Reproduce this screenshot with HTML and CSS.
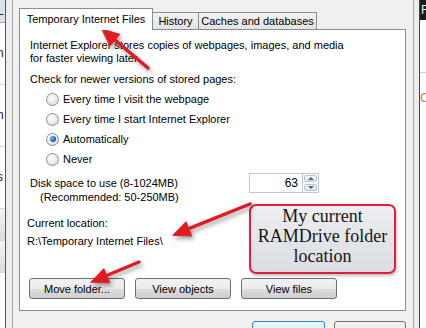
FILE: index.html
```html
<!DOCTYPE html>
<html lang="en">
<head>
    <meta charset="UTF-8">
    <meta name="viewport" content="width=device-width, initial-scale=1.0">
    <title>Internet Options - Temporary Internet Files</title>
    <link rel="stylesheet" href="styles.css">
</head>
<body>
    <!-- 화면 전체 영역 -->
    <div class="screen">
        <!-- 왼쪽 뒤에 보이는 다른 창 조각 -->
        <div class="back-left">
            <div class="back-row back-sel">L</div>
            <div class="back-row back-tall">n</div>
            <div class="back-row back-tall">n</div>
            <div class="back-row back-tall">s</div>
            <div class="back-row back-btn"></div>
            <div class="back-row back-btn"></div>
        </div>

        <!-- 대화상자 창 -->
        <div class="dialog">
            <div class="dialog-body">
                <!-- 탭 목록 -->
                <div class="tabs">
                    <div class="tab active">Temporary Internet Files</div>
                    <div class="tab tab-history">History</div>
                    <div class="tab tab-caches">Caches and databases</div>
                </div>

                <!-- 탭 내용 -->
                <div class="panel">
                    <p class="intro">Internet Explorer stores copies of webpages, images, and media<br>for faster viewing later.</p>
                    <p class="check">Check for newer versions of stored pages:</p>

                    <!-- 라디오 버튼 목록 -->
                    <div class="radios">
                        <div class="radio"><span class="radio-dot"></span>Every time I visit the webpage</div>
                        <div class="radio"><span class="radio-dot"></span>Every time I start Internet Explorer</div>
                        <div class="radio"><span class="radio-dot checked"></span>Automatically</div>
                        <div class="radio"><span class="radio-dot"></span>Never</div>
                    </div>

                    <!-- 디스크 공간 설정 -->
                    <div class="disk-row">
                        <div class="disk-text">
                            Disk space to use (8-1024MB)<br>
                            <span class="disk-rec">(Recommended: 50-250MB)</span>
                        </div>
                        <div class="spinner">
                            <div class="spin-value">63</div>
                            <div class="spin-btns">
                                <span class="spin-up"></span>
                                <span class="spin-down"></span>
                            </div>
                        </div>
                    </div>

                    <!-- 현재 폴더 위치 -->
                    <div class="location">
                        <p>Current location:</p>
                        <p class="location-path">R:\Temporary Internet Files\</p>
                    </div>

                    <!-- 폴더 관련 버튼들 -->
                    <div class="panel-buttons">
                        <button class="btn">Move folder...</button>
                        <button class="btn">View objects</button>
                        <button class="btn">View files</button>
                    </div>
                </div>

                <!-- 확인 / 취소 버튼 -->
                <div class="footer">
                    <button class="btn btn-ok">OK</button>
                    <button class="btn btn-cancel">Cancel</button>
                </div>
            </div>
        </div>

        <!-- 오른쪽 뒤에 보이는 다른 창 조각 -->
        <div class="back-right">
            <div class="back-right-top">F</div>
            <div class="back-right-line"></div>
            <div class="back-right-char">C</div>
        </div>

        <!-- 설명 말풍선 -->
        <div class="callout">My current<br>RAMDrive folder<br>location</div>

        <!-- 빨간 화살표들 -->
        <svg class="arrows" width="426" height="328" viewBox="0 0 426 328">
            <g stroke="#e11b22" stroke-width="3.5" stroke-linecap="round" fill="#e11b22">
                <line x1="148" y1="68" x2="115" y2="40"/>
                <polygon points="102,29 119.9,34.3 110.1,45.7" stroke-width="1"/>
                <line x1="250" y1="204" x2="188.8" y2="228.7"/>
                <polygon points="173,235 186,221.7 191.6,235.7" stroke-width="1"/>
                <line x1="139" y1="262" x2="106.7" y2="275.5"/>
                <polygon points="91,282 103.8,268.6 109.6,282.4" stroke-width="1"/>
            </g>
        </svg>
    </div>
</body>
</html>
```

FILE: styles.css
```css
/* 기본 여백 초기화 */
* {
    margin: 0;
    padding: 0;
    box-sizing: border-box;
}

/* 전체 페이지 */
body {
    font-family: 'Liberation Sans', Arial, sans-serif; /* 윈도우 기본 글꼴과 비슷한 너비 */
    font-size: 11px;
    color: #000;
    background-color: #f0f0f0;
}

/* 화면 전체를 감싸는 영역 */
.screen {
    position: relative; /* 화살표와 말풍선의 기준 */
    display: flex;
    width: 426px;
    height: 328px;
    overflow: hidden;
}

/* 왼쪽 뒤 창 조각 */
.back-left {
    width: 5px;
    background-color: #fbfbfb;
    overflow: hidden;
    font-size: 12px;
    color: #222;
}

.back-row {
    border-bottom: 1px solid #d6d6d6;
    text-indent: -3px; /* 글자가 잘려 보이도록 */
    line-height: 22px;
}

.back-sel {
    height: 23px;
    background-color: #d9e4ef;
    border-bottom: 1px solid #9aa4ae;
}

.back-tall {
    height: 62px;
    line-height: 60px;
}

.back-btn {
    height: 32px;
    background: linear-gradient(#f4f4f4, #dcdcdc);
}

/* 대화상자 창 틀 */
.dialog {
    width: 415px;
    border-left: 1px solid #555;
    border-right: 1px solid #444;
    padding: 0 5px 0 6px;
    background-color: #ececec;
}

/* 대화상자 안쪽 */
.dialog-body {
    height: 100%;
    border-left: 1px solid #a9a9a9;
    border-right: 1px solid #a9a9a9;
    background-color: #f0f0f0;
    padding: 8px 7px 0 6px;
}

/* 탭 목록 */
.tabs {
    display: flex;
    align-items: flex-end;
    height: 21px;
}

.tab {
    height: 17px;
    border: 1px solid #898c95;
    border-bottom: none;
    background: linear-gradient(#f3f3f3, #e3e3e3);
    line-height: 16px;
    text-align: center;
    white-space: nowrap;
}

/* 선택된 탭 */
.tab.active {
    position: relative;
    z-index: 1; /* 패널 위쪽 선을 덮도록 */
    width: 134px;
    height: 22px;
    margin-bottom: -1px;
    background: #fff;
    line-height: 20px;
}

.tab-history {
    width: 47px;
    margin-left: -1px;
}

.tab-caches {
    width: 119px;
    margin-left: -1px;
}

/* 탭 내용 패널 */
.panel {
    height: 282px;
    border: 1px solid #898c95;
    background-color: #fff;
    padding: 9px 0 0 10px;
    line-height: 13px;
}

.check {
    margin-top: 8px;
}

/* 라디오 버튼 */
.radios {
    margin-top: 3px;
    padding-left: 16px;
}

.radio {
    display: flex;
    align-items: center;
    gap: 4px;
    height: 20px;
}

.radio-dot {
    width: 13px;
    height: 13px;
    border: 1px solid #8f8f8f;
    border-radius: 50%;
    background: radial-gradient(circle at 40% 35%, #ffffff, #d6d6d6);
    display: flex;
    align-items: center;
    justify-content: center;
}

/* 선택된 라디오 */
.radio-dot.checked::after {
    content: "";
    width: 6px;
    height: 6px;
    border-radius: 50%;
    background: radial-gradient(circle at 35% 35%, #7cc4f5, #1a5ea8 60%, #0c3a70);
}

/* 디스크 공간 줄 */
.disk-row {
    display: flex;
    margin-top: 7px;
}

.disk-text {
    line-height: 14px;
}

.disk-rec {
    padding-left: 10px;
}

/* 숫자 입력 상자 */
.spinner {
    display: flex;
    margin: -3px 86px 0 auto;
    height: 20px;
}

.spin-value {
    width: 53px;
    border: 1px solid #c3c6cc;
    border-right: none;
    text-align: right;
    padding-right: 4px;
    line-height: 18px;
    font-size: 12px;
}

.spin-btns {
    display: flex;
    flex-direction: column;
    width: 17px;
    border: 1px solid #c3c6cc;
}

.spin-up,
.spin-down {
    flex: 1;
    display: flex;
    align-items: center;
    justify-content: center;
    margin: 1px;
    border: 1px solid #b9c5d6;
    border-radius: 2px;
    background: linear-gradient(#f4f7fb, #dde5ef);
}

.spin-up::after {
    content: "";
    border-left: 3px solid transparent;
    border-right: 3px solid transparent;
    border-bottom: 3px solid #4d6185;
}

.spin-down::after {
    content: "";
    border-left: 3px solid transparent;
    border-right: 3px solid transparent;
    border-top: 3px solid #4d6185;
}

/* 현재 위치 */
.location {
    margin: 13px 0 0 -3px;
}

.location-path {
    margin-top: 5px;
}

/* 패널 안 버튼들 */
.panel-buttons {
    display: flex;
    gap: 10px;
    margin: 30px 0 0 -1px;
}

/* 기본 버튼 모양 */
.btn {
    width: 96px;
    height: 21px;
    border: 1px solid #707070;
    border-radius: 3px;
    background: linear-gradient(#f2f2f2 0%, #ebebeb 50%, #dddddd 51%, #cfcfcf 100%);
    font-family: inherit;
    font-size: 11px;
    color: #000;
}

/* 확인 / 취소 줄 */
.footer {
    display: flex;
    justify-content: flex-end;
    gap: 9px;
    margin-top: 10px;
}

.btn-ok {
    width: 73px;
    height: 23px;
    border-color: #3c7fb1;
    background: linear-gradient(#eaf6fd, #d9f0fc 50%, #bee6fd 51%, #a7d9f5);
}

.btn-cancel {
    width: 72px;
    height: 23px;
}

/* 오른쪽 뒤 창 조각 */
.back-right {
    width: 6px;
    background-color: #fcfcfc;
    overflow: hidden;
}

.back-right-top {
    height: 20px;
    background-color: #1b1b1b;
    color: #eee;
    font-size: 12px;
    line-height: 20px;
    padding-left: 1px;
}

.back-right-line {
    height: 1px;
    margin-top: 52px;
    background-color: #d0d0d0;
}

.back-right-char {
    margin-top: 18px;
    color: #c8804a;
    font-size: 12px;
}

/* 설명 말풍선 */
.callout {
    position: absolute;
    left: 249px;
    top: 204px;
    width: 147px;
    height: 70px;
    border: 2px solid #e01f3d;
    border-radius: 7px;
    background: linear-gradient(#eceef1, #dadde2);
    box-shadow: 1px 2px 3px rgba(0, 0, 0, 0.25);
    font-family: 'Liberation Serif', 'Times New Roman', serif;
    font-size: 18px;
    line-height: 20px;
    color: #151515;
    text-align: center;
}

/* 화살표 층 */
.arrows {
    position: absolute;
    left: 0;
    top: 0;
    pointer-events: none;
    filter: drop-shadow(2px 3px 2px rgba(0, 0, 0, 0.35));
}
```
